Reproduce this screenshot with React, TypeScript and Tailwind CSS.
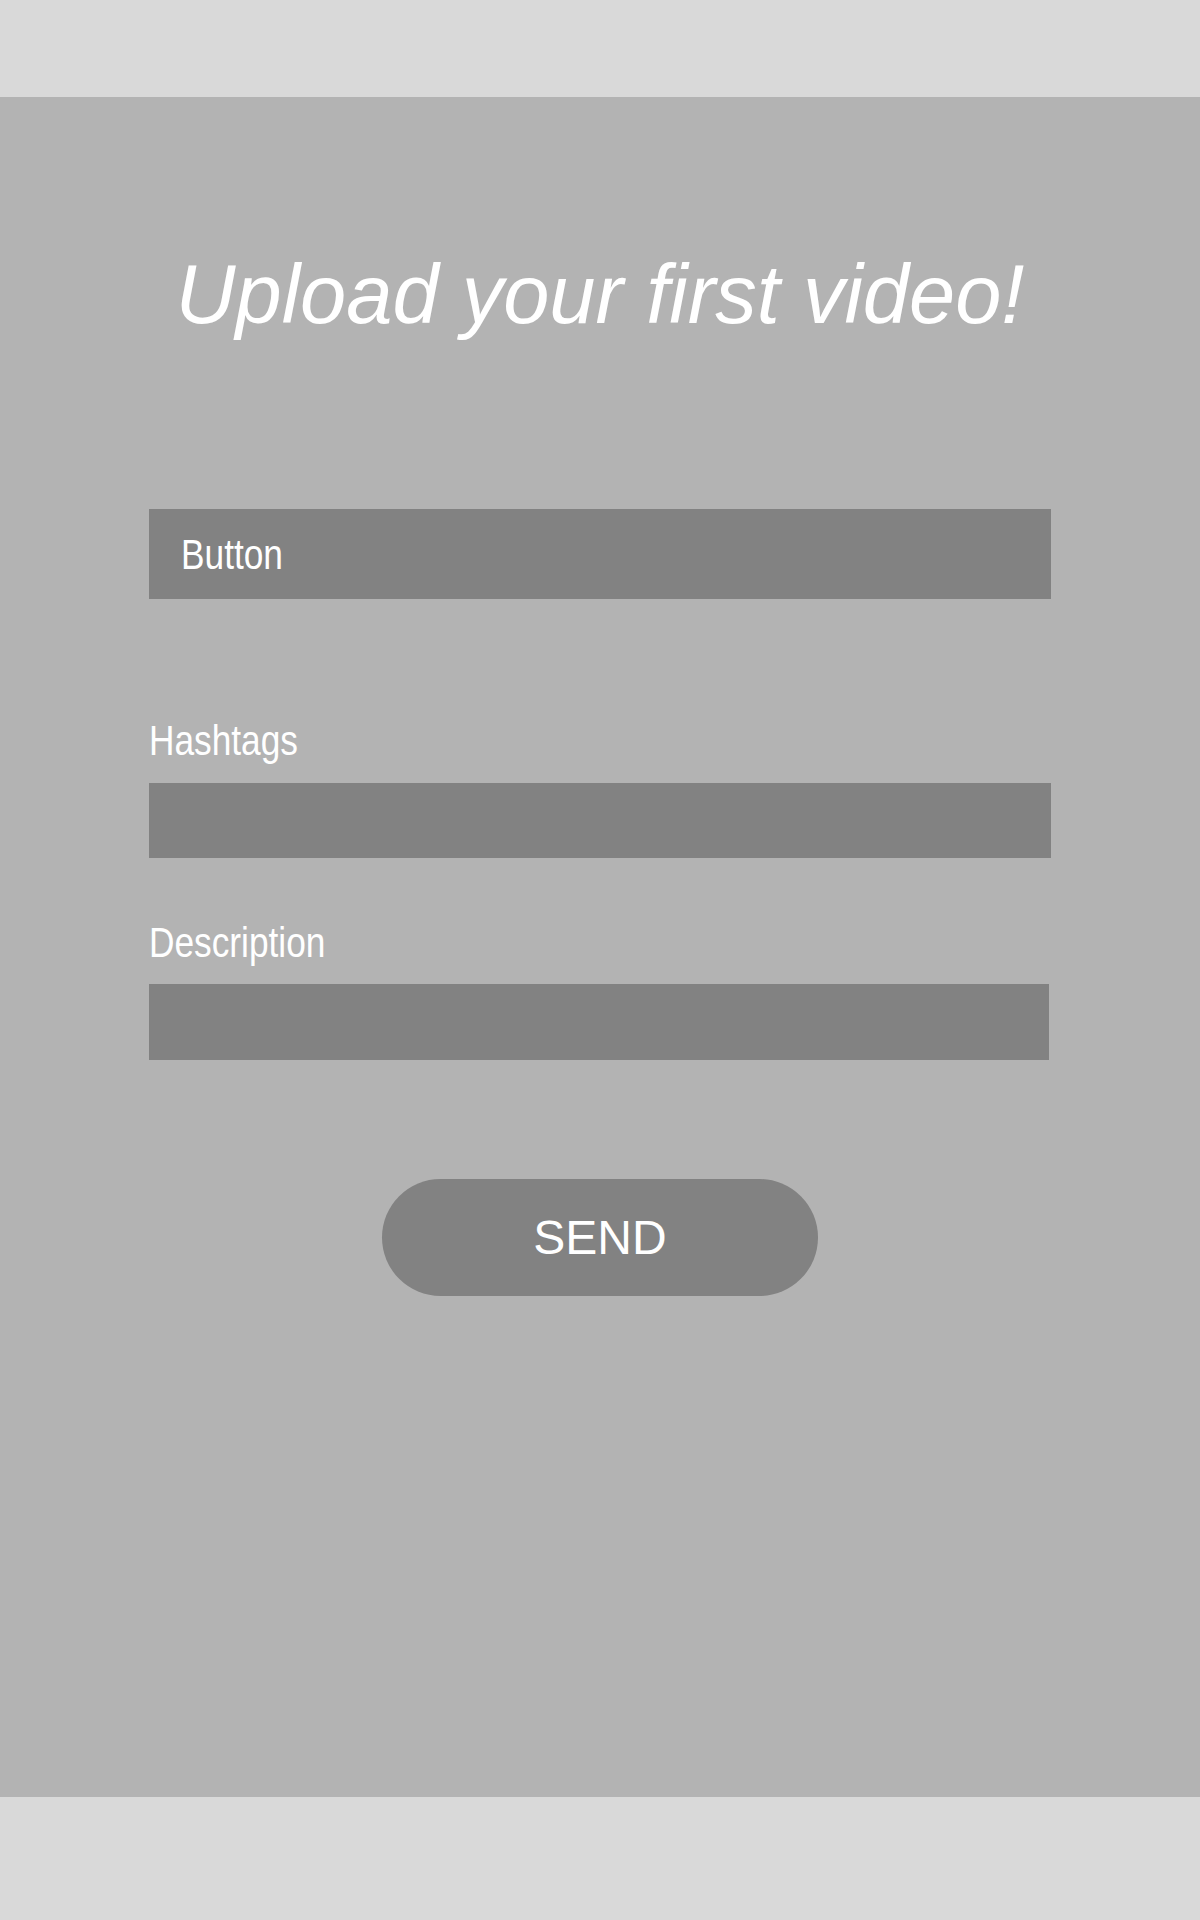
import { useState } from 'react';

// no narrow face installed, so squeeze regular Liberation Sans to Arial Narrow widths
const narrow = 'inline-block origin-left scale-x-[0.82] text-white text-[43px] leading-none';

export default function App() {
  const [hashtags, setHashtags] = useState('');
  const [description, setDescription] = useState('');

  return (
    <div className="min-h-screen w-full bg-[#d9d9d9] font-['Liberation_Sans',Arial,sans-serif]">
      <div className="h-[97px] bg-[#d9d9d9]" />

      <main className="h-[1700px] bg-[#b3b3b3] flex flex-col items-center pt-[156px]">
        <h1 className="text-[83px] leading-none italic text-white text-center">
          Upload your first video!
        </h1>

        <div className="w-[902px] mt-[173px] flex flex-col">
          <button className="h-[90px] w-full bg-[#828282] flex items-center pl-[32px]">
            <span className={narrow}>Button</span>
          </button>

          <label className="mt-[120px] block">
            <span className={narrow}>Hashtags</span>
          </label>
          <input
            value={hashtags}
            onChange={(e) => setHashtags(e.target.value)}
            className="mt-[21px] h-[75px] w-full bg-[#828282] text-white text-3xl px-4 outline-none"
          />

          <label className="mt-[63px] block">
            <span className={narrow}>Description</span>
          </label>
          <input
            value={description}
            onChange={(e) => setDescription(e.target.value)}
            className="mt-[20px] h-[76px] w-[900px] bg-[#828282] text-white text-3xl px-4 outline-none"
          />
        </div>

        <button className="mt-[119px] w-[436px] h-[117px] rounded-full bg-[#828282] text-white text-[48px] leading-none">
          SEND
        </button>
      </main>

      <div className="h-[123px] bg-[#d9d9d9]" />
    </div>
  );
}
